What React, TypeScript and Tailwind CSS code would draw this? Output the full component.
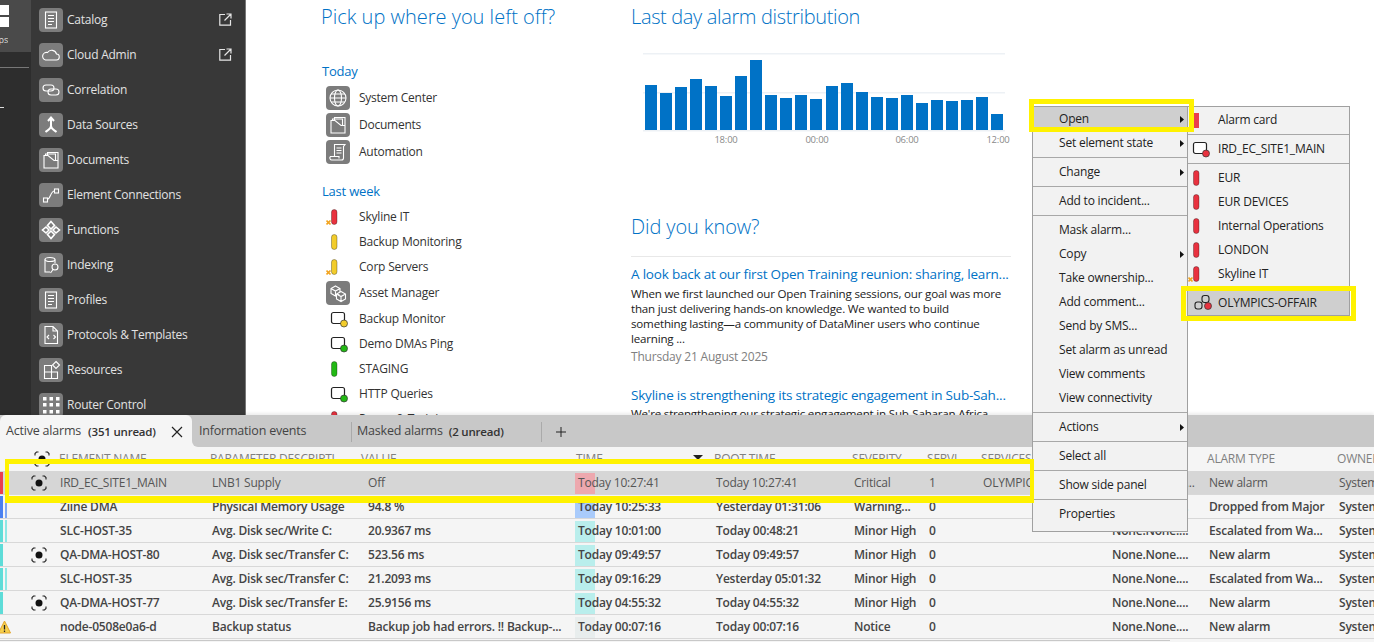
import { ReactNode } from "react";

const rowGrid =
  "grid grid-cols-[60px_152px_156px_207px_141px_138px_75px_54px_129px_97px_130px_35px] items-center";

const bars = [85, 93, 87, 79, 86, 96, 76, 60, 95, 98, 95, 99, 86, 83, 92, 97, 98, 95, 103, 100, 101, 100, 97, 114];

const Tile = ({ children }: { children: ReactNode }) => (
  <div className="flex h-6 w-6 shrink-0 items-center justify-center rounded-[4px] bg-[#7c7c7c]">
    <svg viewBox="0 0 24 24" className="h-6 w-6" fill="none" stroke="white" strokeWidth="1.1">
      {children}
    </svg>
  </div>
);

const icons: Record<string, ReactNode> = {
  catalog: (
    <>
      <rect x="6.5" y="4" width="11" height="16" />
      <path d="M9 7.5h6M9 10.5h6M9 13.5h6M9 16.5h4" />
    </>
  ),
  cloud: <path d="M6.5 17h10.5a3 3 0 0 0 .5-6 5 5 0 0 0-9-1.500A3.800 3.800 0 0 0 6.500 17z" />,
  correlation: (
    <>
      <rect x="4" y="7" width="11" height="6" rx="3" />
      <rect x="9" y="11" width="11" height="6" rx="3" />
    </>
  ),
  dataSources: (
    <path strokeWidth="2" d="M12 6v7c0 3-3 4-5.500 6M12 13c0 3 3 4 5.500 6M9 8l3-3.500L15 8" />
  ),
  documents: (
    <>
      <path d="M8.500 7V4.500H19V20H5V7.500h4L15 12.500h4" />
      <path d="M6.500 7V6h10v6" />
    </>
  ),
  connections: (
    <>
      <rect x="4.500" y="15" width="4" height="4" />
      <rect x="15.500" y="6" width="4" height="4" />
      <path d="M8.500 16c3 0 3-8 7-8" />
    </>
  ),
  functions: (
    <g strokeWidth="1.600">
      <path d="M12 3.500 15.500 7.500 12 11 8.500 7.500z" />
      <path d="M12 13 15.500 16.500 12 20.500 8.500 16.500z" />
      <path d="M7 9 10 12 7 15 3.500 12z" />
      <path d="M17 9 20.500 12 17 15 14 12z" />
    </g>
  ),
  indexing: (
    <>
      <ellipse cx="11" cy="6.500" rx="5" ry="2" />
      <path d="M6 6.500V19h5M16 6.500V10" />
      <circle cx="16" cy="14" r="3" />
      <path d="M14 16.500 11.500 20" />
    </>
  ),
  protocols: (
    <>
      <path d="M6 3.500h8l4.500 4.500v12.500H6zM14 3.500V8h4.500" />
      <path d="M10 12l-2 2 2 2M14.500 12l2 2-2 2" />
    </>
  ),
  resources: (
    <>
      <path d="M5.500 7.500h7v13h-7zM5.500 14h13v6.500h-6" />
      <path d="M17 3.500 20.500 7 17 10.500 13.500 7z" />
    </>
  ),
  router: (
    <g fill="white" stroke="none">
      {[4, 10, 17].map((y) =>
        [4, 10.500, 17].map((x) => <rect key={`${x}-${y}`} x={x} y={y} width="3.500" height="3.500" />),
      )}
    </g>
  ),
  globe: (
    <>
      <circle cx="12" cy="12" r="8" />
      <ellipse cx="12" cy="12" rx="3.500" ry="8" />
      <path d="M4 12h16M5 8h14M5 16h14" />
    </>
  ),
  automation: (
    <>
      <path d="M8.500 16V4.500H19l-1.500 2V18a2 2 0 0 1-2 2H6a2 2 0 0 1-1.500-3.500H13v2" />
      <path d="M10.500 8h5M10.500 10.500h5M10.500 13h5" />
    </>
  ),
  assets: (
    <>
      <path d="M9.500 5 14 7.500v5L9.500 15 5 12.500v-5zM5 7.500l4.500 2.500L14 7.500M9.500 10v5" />
      <path d="M15 10.500l4.500 2.500v5L15 20.500l-4.500-2.500v-5zM10.500 13l4.500 2.500 4.500-2.500M15 15.500v5" fill="#7c7c7c" />
    </>
  ),
};

const ExternalLink = () => (
  <svg viewBox="0 0 13 13" className="h-[13px] w-[13px]" fill="none" stroke="#e6e6e6" strokeWidth="1.200">
    <path d="M6 1.500H.800v10.700h10.700V7M5.500 7.500 11.500 1.500M7.500 1h4.500v4.500" />
  </svg>
);

const navItems = [
  { label: "Catalog", icon: icons.catalog, ext: true },
  { label: "Cloud Admin", icon: icons.cloud, ext: true },
  { label: "Correlation", icon: icons.correlation },
  { label: "Data Sources", icon: icons.dataSources },
  { label: "Documents", icon: icons.documents },
  { label: "Element Connections", icon: icons.connections },
  { label: "Functions", icon: icons.functions },
  { label: "Indexing", icon: icons.indexing },
  { label: "Profiles", icon: icons.catalog },
  { label: "Protocols & Templates", icon: icons.protocols },
  { label: "Resources", icon: icons.resources },
  { label: "Router Control", icon: icons.router },
];

const Pill = ({ color, mark }: { color: string; mark?: boolean }) => (
  <div className="relative h-[24px] w-[26px] shrink-0">
    <svg viewBox="0 0 26 24" className="h-6 w-[26px]">
      <rect x="5.500" y="4.500" width="5.500" height="15" rx="2.700" fill={color} stroke="rgba(0,0,0,0.3)" />
      {mark && (
        <path d="M.500 15.500 4.500 19.500M4.500 15.500 .500 19.500" stroke="#f2a41f" strokeWidth="1.700" fill="none" />
      )}
    </svg>
  </div>
);

const ElementDot = ({ color }: { color: string }) => (
  <div className="h-6 w-[26px] shrink-0">
    <svg viewBox="0 0 26 24" className="h-6 w-[26px]">
      <rect x="5.500" y="5.500" width="13" height="11" rx="2" fill="white" stroke="#222" strokeWidth="1.200" />
      <circle cx="18" cy="16.500" r="3.500" fill={color} stroke="#333" strokeWidth="0.700" />
    </svg>
  </div>
);

const RecentRow = ({ icon, label, rowH = "h-[25px]" }: { icon: ReactNode; label: string; rowH?: string }) => (
  <div className={`flex items-center text-[12px] text-[#333] ${rowH}`}>
    <div className="w-[38px] pl-[5px]">{icon}</div>
    <span className="whitespace-nowrap">{label}</span>
  </div>
);

const Target = () => (
  <svg viewBox="0 0 16 16" className="h-4 w-4" fill="none" stroke="#222" strokeWidth="1.100">
    <circle cx="8" cy="8" r="3.500" fill="#111" stroke="none" />
    <path d="M1 4.500V2.500l1.500-1.500h2M11.500 1h2L15 2.500v2M15 11.500v2L13.500 15h-2M4.500 15h-2L1 13.500v-2" />
  </svg>
);

const rows = [
  { stripe: "bg-[#ea3e4e]", tint: "bg-[#eda8ae]", target: true, name: "IRD_EC_SITE1_MAIN", param: "LNB1 Supply", value: "Off", time: "Today 10:27:41", root: "Today 10:27:41", sev: "Critical", svc: "1", services: "OLYMPICS-OFFAIR", none: "None.None.N...", type: "New alarm", selected: true },
  { stripe: "bg-[#4a80f0]", second: "bg-[#7fa8f5]", tint: "bg-[#a9cbfb]", name: "Ziine DMA", param: "Physical Memory Usage", value: "94.8 %", time: "Today 10:25:33", root: "Yesterday 01:31:06", sev: "Warning...", svc: "0", none: "None.None....", type: "Dropped from Major" },
  { stripe: "bg-[#5edcd8]", second: "bg-[#8de8e5]", tint: "bg-[#b9eeec]", name: "SLC-HOST-35", param: "Avg. Disk sec/Write C:", value: "20.9367 ms", time: "Today 10:01:00", root: "Today 00:48:21", sev: "Minor High", svc: "0", none: "None.None....", type: "Escalated from Wa..." },
  { stripe: "bg-[#5edcd8]", tint: "bg-[#b9eeec]", target: true, name: "QA-DMA-HOST-80", param: "Avg. Disk sec/Transfer C:", value: "523.56 ms", time: "Today 09:49:57", root: "Today 09:49:57", sev: "Minor High", svc: "0", none: "None.None....", type: "New alarm" },
  { stripe: "bg-[#5edcd8]", second: "bg-[#8de8e5]", tint: "bg-[#b9eeec]", name: "SLC-HOST-35", param: "Avg. Disk sec/Transfer C:", value: "21.2093 ms", time: "Today 09:16:29", root: "Yesterday 05:01:32", sev: "Minor High", svc: "0", none: "None.None....", type: "Escalated from Wa..." },
  { stripe: "bg-[#5edcd8]", tint: "bg-[#b9eeec]", target: true, name: "QA-DMA-HOST-77", param: "Avg. Disk sec/Transfer E:", value: "25.9156 ms", time: "Today 04:55:32", root: "Today 04:55:32", sev: "Minor High", svc: "0", none: "None.None....", type: "New alarm" },
  { tint: "bg-[#e8eded]", warn: true, name: "node-0508e0a6-d", param: "Backup status", value: "Backup job had errors. !! Backup-...", time: "Today 00:07:16", root: "Today 00:07:16", sev: "Notice", svc: "0", none: "None.None....", type: "New alarm" },
];

const menuItems = [
  "Open>", "Set element state>", "-", "Change>", "-", "Add to incident...", "-",
  "Mask alarm...", "Copy>", "Take ownership...", "Add comment...", "Send by SMS...",
  "Set alarm as unread", "View comments", "View connectivity", "-", "Actions>", "-",
  "Select all", "-", "Show side panel", "-", "Properties",
];

const Sep = () => (
  <div className="flex h-[5px] items-center">
    <div className="h-px w-full bg-[#a8a8a8]" />
  </div>
);

const Arrow = () => (
  <svg viewBox="0 0 4 7" className="absolute right-[3px] top-[8.500px] h-[7px] w-1">
    <path d="M0 0l4 3.500L0 7z" fill="#111" />
  </svg>
);

const SubRow = ({ icon, label, selected }: { icon: ReactNode; label: string; selected?: boolean }) => (
  <div className={`flex h-6 items-center whitespace-nowrap ${selected ? "bg-[#cfcfcf]" : ""}`}>
    <div className="w-[30px]">{icon}</div>
    <span>{label}</span>
  </div>
);

export default function App() {
  return (
    <div className="relative h-[642px] w-[1374px] overflow-hidden bg-white font-['Open_Sans',sans-serif] tracking-[-0.2px]">
      <div className="flex h-[415px] overflow-hidden">
        {/* left rail */}
        <div className="w-[31px] shrink-0 bg-[#2d2d2d]">
          <div className="flex h-[52px] flex-col bg-[#4a4a4a] pt-[5px]">
            <div className="h-[10px] w-[9px] bg-white" />
            <div className="mt-[2px] h-[10px] w-[9px] bg-white" />
            <div className="mt-[6px] flex w-[8px] justify-end overflow-hidden text-[9px] text-[#ddd]">Apps</div>
          </div>
          <div className="mt-[15px] h-px w-[29px] bg-[#777]" />
          <div className="mt-[39px] h-px w-[4px] bg-[#ddd]" />
        </div>

        {/* apps menu */}
        <div className="w-[215px] shrink-0 border-r border-[#777] bg-[#383838] pl-2 pt-[2px]">
          {navItems.map((item) => (
            <div key={item.label} className="flex h-[35px] items-center pr-[13px] text-[12px] tracking-[-0.25px] text-[#e2e2e2]">
              <Tile>{item.icon}</Tile>
              <span className="ml-1 flex-1 whitespace-nowrap">{item.label}</span>
              {item.ext && <ExternalLink />}
            </div>
          ))}
        </div>

        {/* recents */}
        <div className="ml-[75px] w-[310px] shrink-0 pt-[3px]">
          <h2 className="text-[20px] font-light leading-[28px] tracking-[0px] text-[#0072c6]">Pick up where you left off?</h2>
          <h3 className="mt-[31px] pl-px text-[13px] leading-[18px] text-[#0072c6]">Today</h3>
          <div className="mt-1">
            {[
              { label: "System Center", icon: icons.globe },
              { label: "Documents", icon: icons.documents },
              { label: "Automation", icon: icons.automation },
            ].map((item) => (
              <div key={item.label} className="flex h-[27px] items-center text-[12px] tracking-[-0.25px] text-[#333]">
                <div className="w-[38px] pl-[5px]">
                  <Tile>{item.icon}</Tile>
                </div>
                <span>{item.label}</span>
              </div>
            ))}
          </div>
          <h3 className="mt-[17px] pl-px text-[13px] leading-[18px] text-[#0072c6]">Last week</h3>
          <div className="mt-1">
            <RecentRow label="Skyline IT" icon={<Pill color="#e8323f" mark />} />
            <RecentRow label="Backup Monitoring" icon={<Pill color="#f2cc2b" />} />
            <RecentRow label="Corp Servers" rowH="h-[26px]" icon={<Pill color="#f2cc2b" mark />} />
            <RecentRow label="Asset Manager" rowH="h-[26px]" icon={<Tile>{icons.assets}</Tile>} />
            <RecentRow label="Backup Monitor" icon={<ElementDot color="#f2cc2b" />} />
            <RecentRow label="Demo DMAs Ping" icon={<ElementDot color="#22b814" />} />
            <RecentRow label="STAGING" icon={<Pill color="#22b814" />} />
            <RecentRow label="HTTP Queries" icon={<ElementDot color="#22b814" />} />
            <RecentRow label="Power & Training" icon={<Pill color="#e8323f" />} />
          </div>
        </div>

        {/* chart and news */}
        <div className="w-[380px] shrink-0 pt-[3px]">
          <h2 className="text-[20px] font-light leading-[28px] tracking-[-0.35px] text-[#0072c6]">Last day alarm distribution</h2>
          <svg viewBox="0 0 380 100" className="mt-[14px] block h-[100px] w-[380px]">
            {[53, 92, 130].map((y) => (
              <rect key={y} x="12" y={y - 45} width="362" height="1.500" fill="#edf1f5" />
            ))}
            {bars.map((top, i) => (
              <rect key={i} x={14 + i * 15 + (i > 11 ? 1 : 0)} y={top - 45} width="12" height={130 - top} fill="#0072c6" />
            ))}
            {[
              ["18:00", 95],
              ["00:00", 186],
              ["06:00", 276],
              ["12:00", 367],
            ].map(([label, x]) => (
              <text key={label} x={x} y="98" textAnchor="middle" fontSize="9.500" fill="#8a8a8a">
                {label}
              </text>
            ))}
          </svg>
          <h2 className="mt-[68px] text-[20px] font-light leading-[28px] tracking-[-0.1px] text-[#0072c6]">Did you know?</h2>
          <div className="mt-[15px] h-px bg-[#e8e8e8]" />
          <div className="mt-[8px] whitespace-nowrap text-[13.500px] leading-[18px] text-[#0072c6]">
            A look back at our first Open Training reunion: sharing, learn...
          </div>
          <p className="mt-[3px] w-[375px] text-[11.600px] leading-[15px] text-[#222]">
            When we first launched our Open Training sessions, our goal was more than just delivering hands-on knowledge. We wanted to build something lasting—a community of DataMiner users who continue learning ...
          </p>
          <div className="mt-[2px] text-[12px] leading-[18px] text-[#808080]">Thursday 21 August 2025</div>
          <div className="mt-[20px] whitespace-nowrap text-[13.500px] leading-[18px] text-[#0072c6]">
            Skyline is strengthening its strategic engagement in Sub-Sah...
          </div>
          <p className="mt-[2px] whitespace-nowrap text-[11.600px] leading-[15px] text-[#222]">
            We're strengthening our strategic engagement in Sub-Saharan Africa
          </p>
        </div>
      </div>

      {/* alarm console */}
      <div className="relative h-[227px] bg-[#f5f5f5] shadow-[0_-2px_3px_rgba(0,0,0,0.08)]">
        <div className="flex h-[32px] bg-[#f5f5f5]">
          <div className="w-[192px] bg-[#c8c8c8]">
            <div className="flex h-full items-center rounded-t-[6px] bg-[#f5f5f5] pl-[6px] pt-px">
              <span className="whitespace-nowrap text-[12.500px] text-[#444]">Active alarms</span>
              <span className="ml-[7px] whitespace-nowrap text-[11.500px] font-semibold text-[#333]">(351 unread)</span>
              <svg viewBox="0 0 12 12" className="ml-auto mr-[9px] h-3 w-3" stroke="#222" strokeWidth="1.200">
                <path d="M1 1l10 10M11 1 1 11" />
              </svg>
            </div>
          </div>
          <div className="flex flex-1 items-center rounded-bl-[6px] bg-[#c8c8c8] pt-px text-[12.500px] text-[#444]">
            <span className="ml-[7px] w-[152px] whitespace-nowrap">Information events</span>
            <div className="h-[20px] w-px bg-[#aaa]" />
            <span className="ml-[5px] whitespace-nowrap">Masked alarms</span>
            <span className="ml-[6px] w-[92px] whitespace-nowrap text-[11.500px] font-semibold text-[#333]">(2 unread)</span>
            <div className="h-[20px] w-px bg-[#aaa]" />
            <svg viewBox="0 0 10 10" className="ml-[14px] h-[10px] w-[10px]" stroke="#222" strokeWidth="1">
              <path d="M5 0v10M0 5h10" />
            </svg>
          </div>
        </div>

        <div className={`${rowGrid} h-[24px] whitespace-nowrap text-[12px] text-[#808080]`}>
          <div className="flex justify-end pr-[10px]">
            <Target />
          </div>
          <div className="-ml-px">ELEMENT NAME</div>
          <div className="-ml-[2px]">PARAMETER DESCRIPTI</div>
          <div className="-ml-[7px]">VALUE</div>
          <div className="relative ml-px">
            TIME
            <svg viewBox="0 0 10 5" className="absolute left-[117px] top-[5px] h-[5px] w-[10px]">
              <path d="M0 0h10L5 5z" fill="#222" />
            </svg>
          </div>
          <div className="-ml-[2px]">ROOT TIME</div>
          <div className="-ml-[2px]">SEVERITY</div>
          <div className="-ml-[2px]">SERVI</div>
          <div className="-ml-[2px]">SERVICES</div>
          <div />
          <div className="-ml-[2px]">ALARM TYPE</div>
          <div className="-ml-[2px]">OWNER</div>
        </div>

        {rows.map((row, i) => (
          <div
            key={i}
            className={`${rowGrid} relative h-[24px] whitespace-nowrap border-b border-[#d8d8d8] pt-px text-[12px] ${
              row.selected ? "bg-[#d6d6d6] font-normal text-[#555]" : "font-semibold text-[#444]"
            }`}
          >
            <div className="flex h-full items-center">
              {row.stripe && <div className={`h-full w-[3px] ${row.stripe}`} />}
              {row.second && <div className={`ml-[2px] h-full w-[2px] ${row.second}`} />}
              {row.warn && (
                <svg viewBox="0 0 13 14" className="-ml-[2px] h-[14px] w-[13px]">
                  <path d="M6.500 1 12.500 13H.500z" fill="#f6d04d" stroke="#e2a52c" strokeLinejoin="round" />
                  <path d="M6.500 5v4.500M6.500 10.500v1.500" stroke="#222" strokeWidth="1.300" />
                </svg>
              )}
              {row.target && (
                <div className="absolute left-[31px]">
                  <Target />
                </div>
              )}
            </div>
            <div>{row.name}</div>
            <div>{row.param}</div>
            <div className="overflow-hidden">{row.value}</div>
            <div className="relative flex h-full items-center pl-[3px]">
              <div className={`absolute left-0 top-px h-[21px] w-[20px] ${row.tint}`} />
              <span className="relative">{row.time}</span>
            </div>
            <div>{row.root}</div>
            <div>{row.sev}</div>
            <div>{row.svc}</div>
            <div>{row.services}</div>
            <div>{row.none}</div>
            <div>{row.type}</div>
            <div>System</div>
          </div>
        ))}
        <div className="mt-px h-px w-[1170px] bg-[#c8c8c8]" />
      </div>

      {/* context menu */}
      <div className="absolute left-[1032px] top-[106px] w-[156px] border border-[#a0a0a0] bg-[#f2f2f2] pb-[5px] text-[12px] text-[#222]">
        {menuItems.map((item, i) => {
          if (item === "-") return <Sep key={i} />;
          const hasSub = item.endsWith(">");
          return (
            <div key={item} className={`relative flex h-6 items-center pl-[26px] ${item === "Open>" ? "bg-[#cfcfcf]" : ""}`}>
              {hasSub ? item.slice(0, -1) : item}
              {hasSub && <Arrow />}
            </div>
          );
        })}
      </div>

      {/* open submenu */}
      <div className="absolute left-[1187px] top-[106px] w-[163px] border border-[#a0a0a0] bg-[#f2f2f2] pt-px text-[12px] text-[#222]">
        <SubRow
          label="Alarm card"
          icon={<div className="ml-[6px] h-[15px] w-[5px] bg-[#ea3e4e]" />}
        />
        <Sep />
        <SubRow label="IRD_EC_SITE1_MAIN" icon={<ElementDot color="#e8323f" />} />
        <Sep />
        {["EUR", "EUR DEVICES", "Internal Operations", "LONDON"].map((label) => (
          <SubRow key={label} label={label} icon={<Pill color="#e8323f" />} />
        ))}
        <SubRow label="Skyline IT" icon={<Pill color="#e8323f" mark />} />
        <div className="h-[5px]" />
        <SubRow
          selected
          label="OLYMPICS-OFFAIR"
          icon={
            <svg viewBox="0 0 20 20" className="ml-[5px] h-[20px] w-[20px]" fill="none" stroke="#222" strokeWidth="1.100">
              <rect x="9" y="2.500" width="7" height="7" rx="2.500" />
              <rect x="2" y="9" width="7" height="7" rx="2.500" />
              <circle cx="15" cy="13" r="3.500" fill="#e8323f" stroke="#333" strokeWidth="0.700" />
            </svg>
          }
        />
      </div>

      {/* yellow callouts drawn on the screenshot */}
      <div className="absolute left-[1029px] top-[99px] h-[33px] w-[165px] border-[5px] border-[#fff200]" />
      <div className="absolute left-[1181px] top-[286px] h-[35px] w-[175px] border-[5px] border-[#fff200]" />
      <div className="absolute left-[5px] top-[459px] h-[44px] w-[1029px] border-x-[4px] border-b-[7px] border-t-[5px] border-[#fff200]" />
    </div>
  );
}
